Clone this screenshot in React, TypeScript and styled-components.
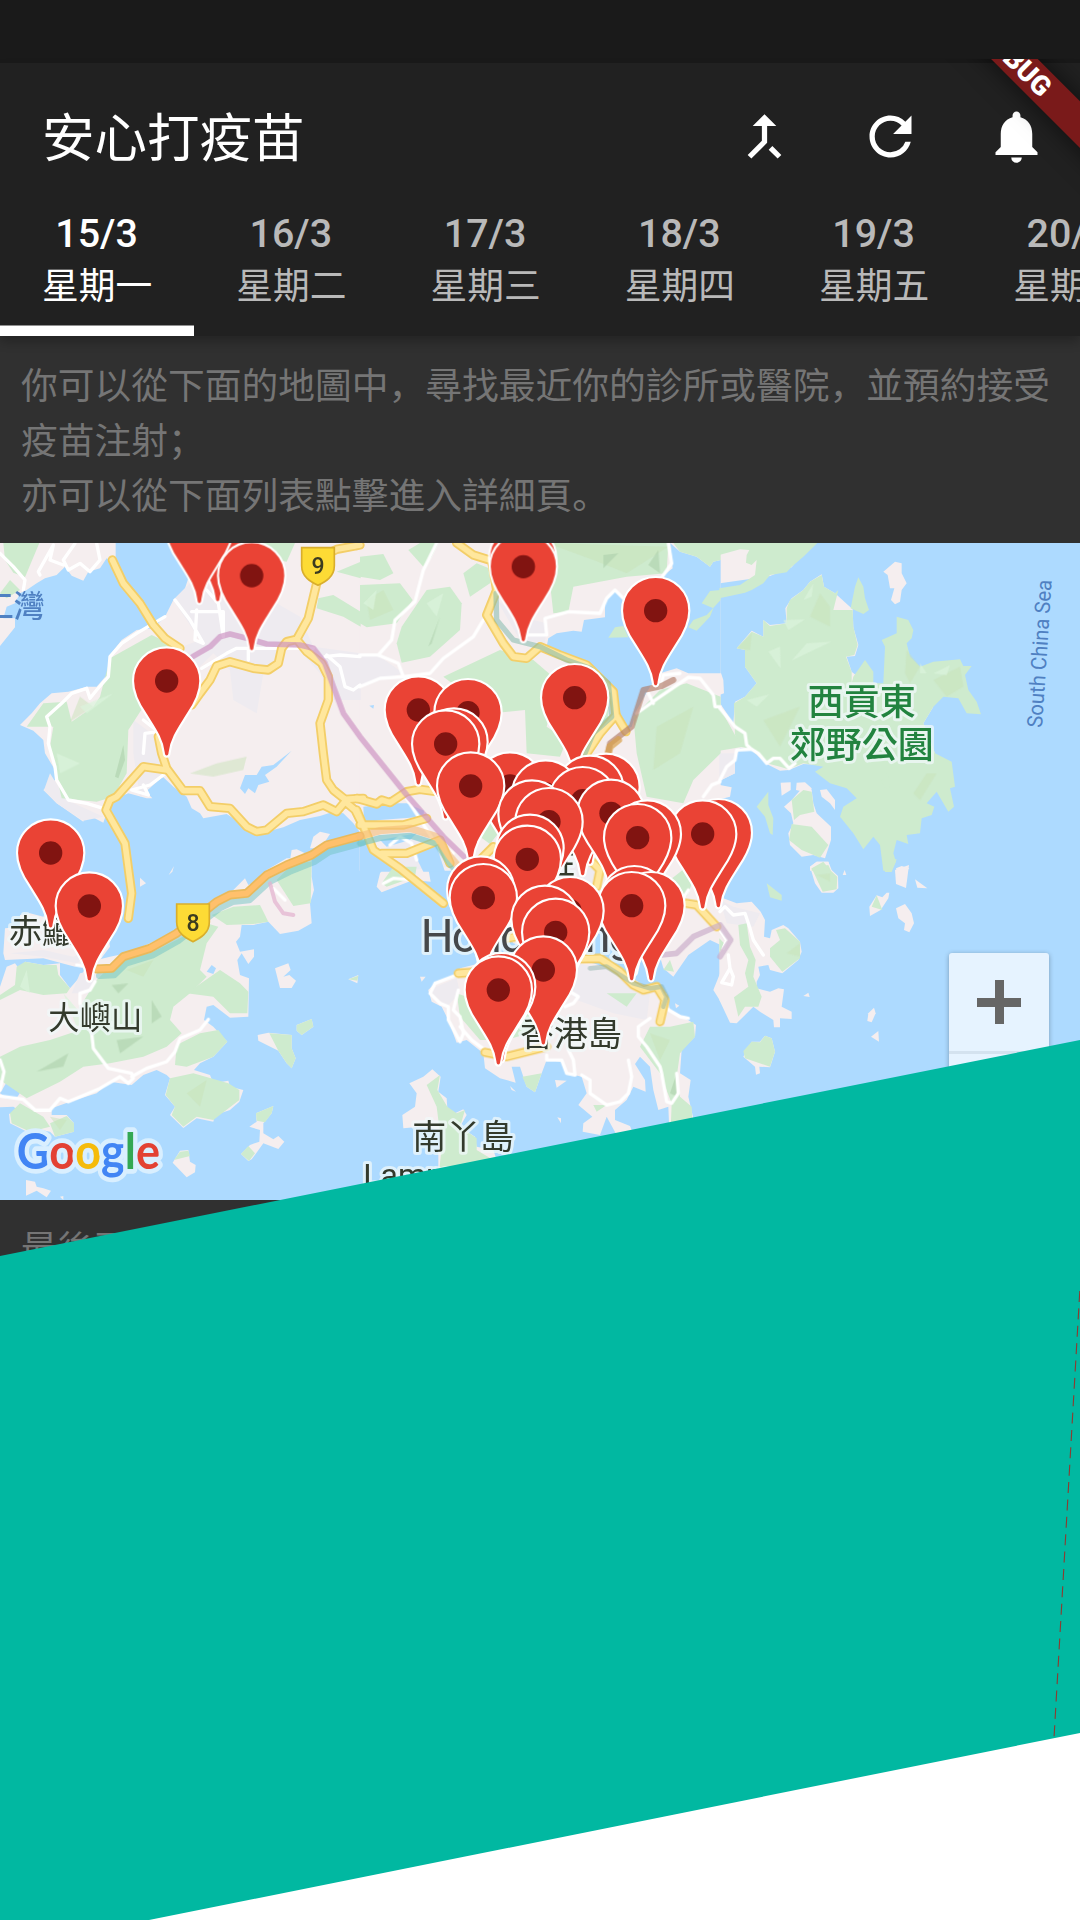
import React from "react";
import styled, { createGlobalStyle, css } from "styled-components";
import { MdCallMerge, MdRefresh, MdNotifications } from "react-icons/md";

const FONT = `Roboto, "Noto Sans CJK SC", sans-serif`;

const Global = createGlobalStyle`
  * { box-sizing: border-box; }
  body { margin: 0; background: #fff; font-family: ${FONT}; }
`;

const Screen = styled.main`
  position: relative;
  width: 1080px;
  height: 1920px;
  overflow: hidden;
  display: flex;
  flex-direction: column;
  background: #303030;
`;

const StatusBar = styled.div`
  height: 63px;
  flex: none;
  background: #1a1a1a;
`;

const AppBar = styled.header`
  position: relative;
  flex: none;
  height: 273px;
  background: #212121;
  box-shadow: 0 6px 10px rgba(0, 0, 0, 0.24);
`;

const Toolbar = styled.div`
  height: 147px;
  padding-left: 42px;
  display: flex;
  align-items: center;
  justify-content: space-between;
`;

const Title = styled.h1`
  margin: 0;
  padding-top: 5px;
  color: #fff;
  font-size: 52.5px;
  font-weight: 400;
  line-height: 76px;
`;

const Actions = styled.div`
  display: flex;
`;

const IconButton = styled.button`
  width: 126px;
  height: 126px;
  padding: 0 1px 0 0;
  border: 0;
  background: none;
  color: #fff;
  font-size: 63px;
  display: flex;
  align-items: center;
  justify-content: center;
`;

const Tabs = styled.nav`
  height: 126px;
  display: flex;
  overflow: hidden;
`;

const Tab = styled.div<{ $active?: boolean }>`
  flex: none;
  width: 194.25px;
  height: 126px;
  padding-top: 3px;
  display: flex;
  flex-direction: column;
  align-items: center;
  white-space: nowrap;
  color: ${(p) => (p.$active ? "#fff" : "#b9b9b9")};
  ${(p) =>
    p.$active &&
    css`
      box-shadow: inset 0 -10.5px 0 #fff;
    `}
`;

const TabDate = styled.span`
  padding-right: 1px;
  font-size: 39.4px;
  font-weight: 500;
  line-height: 42px;
`;

const TabDay = styled.span`
  font-size: 36.75px;
  line-height: 64px;
`;

const Content = styled.section`
  flex: none;
  display: flex;
  flex-direction: column;
`;

const Notice = styled.p`
  margin: 0;
  height: 207px;
  padding: 23px 21px 0;
  color: #757575;
  font-size: 36.75px;
  line-height: 55px;
`;

const Updated = styled.p`
  margin: 0;
  padding: 22px 21px;
  color: #757575;
  font-size: 36.75px;
  line-height: 55px;
`;

const MapFrame = styled.div`
  position: relative;
  height: 657px;
  background: #addaff;
`;

const MapCanvas = styled.svg`
  display: block;
  width: 1080px;
  height: 657px;
`;

const ZoomControl = styled.div`
  position: absolute;
  left: 949px;
  top: 410px;
  width: 100px;
  height: 200px;
  border-radius: 3px;
  background: #e6f3ff;
  box-shadow: 0 1px 5px rgba(0, 0, 0, 0.3);
`;

const ZoomButton = styled.div`
  height: 101px;
  display: flex;
  align-items: center;
  justify-content: center;
  border-bottom: 3px solid #d4e2ef;
`;

const PlusMark = styled.span`
  width: 44px;
  height: 44px;
  background: linear-gradient(#666, #666) center / 44px 9px no-repeat,
    linear-gradient(#666, #666) center / 9px 44px no-repeat;
`;

const BannerClip = styled.div`
  position: absolute;
  top: 59px;
  right: 0;
  width: 320px;
  height: 200px;
  overflow: hidden;
`;

const DebugBanner = styled.div`
  position: absolute;
  left: 55.5px;
  top: -15.5px;
  width: 400px;
  height: 32.5px;
  transform: rotate(45deg);
  background: #7a1a1a;
  box-shadow: 0 0 26px rgba(0, 0, 0, 0.6);
  color: #fff;
  font-size: 27.5px;
  font-weight: 900;
  line-height: 33px;
  text-align: center;
`;

const Sweep = styled.div`
  position: absolute;
  left: 0;
  top: 0;
  width: 1080px;
  height: 1920px;
  background: #01b8a1;
  clip-path: polygon(0 1256px, 1080px 1040px, 1080px 1920px, 0 1920px);
`;

const Blank = styled.div`
  position: absolute;
  left: 0;
  top: 0;
  width: 1080px;
  height: 1920px;
  background: #fff;
  clip-path: polygon(149px 1920px, 1080px 1733px, 1080px 1920px);
`;

const DashedTrace = styled.svg`
  position: absolute;
  left: 0;
  top: 0;
  width: 1080px;
  height: 1920px;
`;

/* Map geometry: the map is split into six sheets, three across and two down. */
const SHEETS = [
  [0, 0],
  [1080, 0],
  [2160, 0],
  [0, 960],
  [1080, 960],
  [2160, 960],
];

const LAND: string[][] = [
  [
    "0,0 347,0 347,70 320,55 300,85 265,95 250,122 215,107 195,80 170,105 135,115 110,130 80,150 60,160 45,190 20,200 10,235 45,235 45,262 0,318",
    "610,0 570,100 555,145 520,180 495,230 460,265 410,270 365,300 330,345 325,400 290,440 260,440 205,455 155,460 120,490 95,520 60,555 100,572 130,600 135,640 165,690 165,720 130,750 170,790 250,845 255,820 310,848 330,790 350,775 385,760 440,775 457,775 425,740 445,725 490,712 520,740 560,770 575,805 600,820 610,835 680,822 700,835 730,840 760,870 800,875 850,862 900,840 960,828 1000,815 1030,820 1060,850 1082,880 1082,0",
    "940,890 960,875 990,882 962,925 930,925",
    "875,930 890,928 915,940 900,960 870,960",
  ],
  [
    "-2,0 1082,0 1082,992 -2,992",
  ],
  [
    "0,390 10,420 12,460 -2,465",
    "0,490 40,550 45,485 75,470 110,430 75,380 75,330 50,325 95,272 130,290 130,240 150,255 200,250 196,205 215,175 250,150 270,125 305,103 312,140 345,160 398,208 400,262 415,315 405,348 380,350 395,395 500,480 640,500 610,550 645,640 560,700 385,680 250,672 207,690 180,692 140,672 95,630 60,625 45,650 45,700 0,722",
    "0,735 35,742 30,770 0,778",
    "490,95 525,65 545,70 545,100 560,130 545,150 540,185 525,193 513,180 523,145 510,145 503,105",
    "215,780 250,740 275,750 280,790 290,820 333,860 333,900 315,955 280,945 245,950 210,915 205,880 220,850 213,820 192,800",
    "300,750 320,748 345,780 345,810 330,790 305,770",
    "182,728 212,727 212,750 185,767",
    "230,728 255,727 275,745 272,760 228,750",
    "270,980 290,965 325,965 333,992 270,992",
    "528,985 545,978 568,985 560,992 530,992",
    "0,9 120,20 245,45 215,82 150,108 0,130",
  ],
  [
    "15,205 60,200 60,165 90,160 130,170 220,180 325,225 330,260 300,300 225,320 130,295 15,300 10,280",
    "0,380 20,320 45,310 60,330 75,305 130,315 180,310 180,345 210,385 240,350 260,320 290,300 330,290 380,280 450,250 530,210 600,180 640,150 700,90 735,55 745,75 765,65 800,30 860,-5 935,-5 935,50 942,90 930,130 935,190 895,212 840,222 805,185 760,195 725,195 720,230 708,245 720,275 762,268 762,290 745,312 725,280 712,300 720,345 747,355 745,470 690,473 640,435 620,440 612,480 640,500 682,545 640,590 600,610 582,630 630,645 640,670 685,662 690,680 730,690 718,725 690,750 645,765 640,785 590,775 550,804 510,765 525,740 495,705 510,655 500,645 470,630 430,645 395,675 330,665 290,700 210,725 155,745 155,765 200,765 222,790 222,815 165,830 150,815 125,810 90,820 30,790 27,762 55,750 40,740 0,742",
    "825,325 865,310 872,330 850,350 868,345 888,362 875,384 840,384",
    "890,495 935,477 940,500 905,525 890,512",
    "773,525 805,518 875,525 875,565 887,595 875,625 860,610 835,572 775,542",
    "768,760 820,738 815,760 790,790 790,820 820,838 835,828 853,845 835,867 790,850 755,898 745,903 723,882 750,855 778,845 780,810 748,800 770,785",
    "518,908 540,872 565,870 570,905 587,915 585,937 560,952",
    "78,960 105,965 110,980 130,985 153,992 140,1012 110,992 78,1007",
    "1045,358 1075,345 1072,370",
    "506,45 522,18 517,35",
    "420,53 438,70 420,80",
    "180,1010 190,1008 190,1020",
  ],
  [
    "60,40 90,-2 200,-2 212,65 160,60 65,97 50,80",
    "390,-2 1082,-2 1082,255 1050,240 985,285 940,350 910,325 880,220 850,170 790,150 740,190 700,210 640,250 540,270 460,250 430,200 400,100",
    "1082,335 1060,390 1082,425",
    "205,390 225,370 290,350 300,325 360,310 480,300 640,300 700,310 760,330 800,345 860,380 920,400 930,450 960,465 1008,495 1005,530 965,570 960,640 992,660 985,710 1000,775 1000,860 930,860 925,740 895,750 880,690 870,620 840,590 825,612 855,660 857,695 820,680 800,720 765,750 765,780 810,798 817,815 770,825 740,770 720,825 668,815 670,790 697,770 655,735 680,700 665,650 620,640 605,605 560,600 545,640 525,697 500,680 480,620 455,620 467,668 420,655 375,625 370,580 320,540 290,548 265,480 245,440 215,425",
    "148,670 190,650 217,628 242,650 235,695 260,715 262,745 285,760 310,748 320,765 300,800 345,830 350,860 400,870 420,930 235,960 235,880 245,810 180,800 130,805 127,765 165,740 170,700",
    "180,350 197,350 185,365",
    "585,660 620,662 590,683",
    "450,678 468,695 455,690",
    "592,772 603,775 603,790",
    "945,430 958,437 948,445",
  ],
  [
    "-2,110 50,130 95,125 122,155 135,180 132,230 150,235 155,210 190,195 205,205 240,245 245,275 235,300 187,340 150,330 145,315 115,320 120,345 110,365 110,385 150,395 175,385 192,388 185,440 215,455 215,477 180,475 180,502 162,502 160,480 120,455 100,440 70,470 50,490 30,488 -2,420",
    "270,20 290,5 325,5 335,30 354,48 355,85 340,98 305,98 285,70",
    "525,30 567,15 558,84 528,72",
    "585,58 622,85 592,83",
    "448,140 470,106 487,112 500,98 508,98 505,115 482,150 450,168",
    "528,145 555,132 575,160 582,190 568,217 552,210 555,190 535,175",
    "445,460 462,443 467,460 455,487 442,483",
    "453,530 475,513 477,545",
    "70,590 95,545 120,545 135,527 155,535 165,575 150,622 118,620 120,640 108,644 105,620",
    "250,408 265,398 269,411",
    "368,45 374,30 379,45",
  ],
];

const URBAN: string[][] = [
  [
    "520,180 600,100 680,190 760,230 830,190 900,230 940,320 1082,340 1082,480 1000,480 960,400 880,310 840,350 790,400 770,520 700,480 690,390 640,340 590,390 520,330 600,300",
    "400,540 480,600 500,700 420,770 400,640",
    "150,700 200,780 310,830 250,842 170,790 132,750",
  ],
  ["0,340 60,350 130,400 60,420 0,440", "410,180 480,230 560,250 555,310 480,300", "30,980 120,880 220,880 270,980 150,990"],
  ["-2,640 45,640 45,700 -2,722"],
  ["30,280 130,270 220,290 300,260 230,310 130,290", "240,340 290,330 270,400 215,400"],
  ["205,390 290,355 300,400 260,440", "640,310 780,330 870,400 860,480 760,460 650,420 620,380", "400,0 700,0 740,160 640,240 480,250 410,120"],
  ["0,120 40,140 120,160 100,200 20,190"],
];

const WATER: string[][] = [
  ["720,745 735,705 770,705 785,680 820,675 875,632 830,680 795,705 808,725 775,735 765,760 745,745 735,762"],
  [
    "930,9 960,35 1010,50 1050,80 1060,65 1082,60 1082,400 985,400 950,385 900,400 870,440 830,510 815,560 795,570 775,520 770,470 740,430 700,385 660,360 600,345 560,320 565,295 590,280 640,272 665,275 672,240 735,232 735,185 765,150 795,175 900,115 938,85",
    "10,800 100,790 140,790 192,812 190,830 60,840 12,850",
    "-2,905 30,900 60,960 135,995 -2,995",
    "165,945 225,905 255,995 190,995",
    "60,900 170,880 150,900 80,920",
    "28,497 42,495 40,506",
  ],
  [],
  ["0,700 30,650 50,645 65,690 50,715 20,715", "620,335 635,315 648,325 640,342"],
  [],
  [],
];

const GREEN: string[][] = [
  [
    "10,9 118,9 75,112 40,98 15,60",
    "455,285 530,320 545,400 430,500 385,570 380,700 340,770 290,785 185,775 150,620 160,560 80,560 130,490 200,485 215,545 280,500 300,470 330,355",
    "780,9 885,9 860,65 800,55",
    "955,175 1000,165 1082,215 1082,260 1030,230 950,205",
    "1010,95 1082,65 1082,115",
    "0,160 30,120 60,150 20,175",
  ],
  [
    "0,50 70,42 100,100 60,120 0,110",
    "0,135 120,130 158,180 110,250 20,262 0,250",
    "125,260 200,150 270,140 305,190 300,270 210,350 125,368 110,310",
    "145,30 180,9 235,9 215,50 190,80",
    "310,100 350,70 400,90 390,130 330,170",
    "560,9 925,9 920,100 800,110 640,140 625,215 580,220 570,130",
    "250,410 420,330 520,360 590,420 560,560 620,600 600,650 500,640 495,510 400,520 330,470",
    "820,530 900,450 980,430 1082,470 1082,640 1000,720 970,790 860,770 830,640",
    "940,9 1082,9 1082,60 1060,65 1050,80 1010,50 960,35",
    "1082,150 1050,153 1025,190 1060,205 1050,230 1010,272 985,262 1000,240 1040,225 1082,180",
    "745,293 765,262 790,258 805,292",
    "560,430 680,400 740,440 745,540 680,600 600,560",
    "360,890 385,840 415,880 390,912",
  ],
  [
    "-2,9 292,9 250,50 215,80 200,97 150,105 130,130 95,150 75,158 -2,175 -2,145 60,135 105,105 110,60 95,75 78,68 80,45 88,30 60,28 -2,45",
    "305,105 312,140 345,160 355,150 340,210 398,210 400,260 413,315 403,345 378,350 395,395 395,430 400,410 435,360 460,395 460,430 490,430 495,320 485,300 530,280 530,230 565,240 580,270 575,295 560,310 570,350 600,380 640,365 720,358 730,378 755,378 735,405 745,450 770,485 783,523 740,520 715,475 670,470 640,500 610,550 645,640 695,665 705,740 690,745 702,800 685,815 650,755 620,790 643,800 635,825 605,835 600,880 560,885 565,912 530,900 520,940 528,965 515,992 490,992 480,915 460,890 430,928 400,880 360,830 370,800 410,775 380,745 330,730 285,695 310,680 250,670 205,688 180,680 140,670 105,630 60,620 45,585 42,490 75,470 110,430 75,380 75,330 50,325 95,275 130,290 130,240 150,258 200,250 200,205 210,180 250,150 270,125",
    "-2,500 45,585 70,620 -2,632",
    "415,112 430,140 435,175 447,210 430,222 392,205 405,140",
    "110,800 145,755 145,795 160,835 158,885 150,880 135,830",
    "215,780 250,750 275,755 283,815 240,825 222,840",
    "215,852 275,860 325,915 300,953 245,930 207,900",
    "275,985 325,975 333,992 275,992",
    "485,720 505,692 508,748 492,742",
  ],
  [
    "0,405 45,375 50,320 75,305 130,315 170,315 175,345 210,385 200,400 130,405 60,390 0,420",
    "290,360 350,300 450,280 540,235 620,190 655,200 620,250 600,330 620,350 570,400 520,440 510,480 545,520 500,560 430,590 330,610 250,620 180,665 80,715 0,660 0,590 60,560 150,540 240,510 240,440",
    "635,165 700,140 780,135 805,185 760,192 680,195",
    "830,60 880,10 935,5 932,130 880,138",
    "560,400 660,330 720,370 745,395 742,460 690,460 640,410",
    "530,555 600,520 655,510 682,545 640,590 560,620 525,615",
    "510,655 580,640 685,670 718,690 718,720 640,780 590,770 550,800 515,765 525,740 497,705",
    "30,760 60,730 130,770 150,800 90,815 35,790",
    "150,790 200,768 222,790 222,815 165,830",
    "890,495 935,477 940,500 905,525 890,512",
    "808,520 875,525 875,565 887,595 875,625 860,610 835,572",
    "768,760 820,738 815,760 795,787 770,782",
    "723,882 745,858 765,880 747,903",
    "522,900 540,875 565,872 570,888",
    "1045,358 1075,347 1072,362",
  ],
  [
    "290,400 320,410 390,500 400,540 360,540 300,470",
    "840,560 870,500 930,500 1000,485 1005,530 960,580 950,650 960,710 995,740 1000,860 930,860 935,730 900,640 870,600",
    "487,650 545,640 525,697 500,680",
    "200,675 240,645 232,690 262,740 290,760 315,750 300,800 350,835 350,870 400,900 235,960 245,860 230,740",
    "740,400 830,400 800,440",
    "65,70 100,20 170,20 165,50 80,80",
    "930,60 980,20 1000,60 980,110",
    "910,330 930,300 942,335",
    "430,450 510,440 540,510 440,540",
    "700,735 740,735 710,755",
  ],
  [
    "55,195 80,190 90,260 107,300 100,350 125,410 115,440 75,440 55,470 42,412 85,380 75,340 85,300 60,255",
    "150,265 180,240 168,210 195,205 240,245 240,295 187,335 150,290",
    "275,25 310,5 330,30 352,50 350,88 308,95",
    "490,-2 530,-2 515,36 495,36",
    "140,70 185,105 185,122 150,112",
    "455,140 470,106 487,150",
    "70,573 95,545 120,547 135,527 155,535 165,575 150,620 75,595",
    "-2,235 12,250 -2,280",
  ],
];

const SHADE: string[][] = [
  ["345,710 370,615 375,660 355,715"],
  ["730,45 775,40 730,85", "865,75 895,30 900,100", "205,320 240,230 215,310"],
  [],
  ["335,375 385,370 355,400", "110,635 205,580 190,620", "350,540 430,530 360,580", "455,420 485,470 455,490"],
  ["930,700 950,640 950,710"],
  [],
];

const SOFT_SHADE: string[][] = [
  ["570,700 650,670 740,650 730,690 640,710", "210,545 240,470 280,500"],
  ["560,9 925,20 800,100 700,60", "890,560 1000,500 960,640 880,690", "20,180 70,150 100,210 30,240"],
  ["560,330 600,380 570,430 555,400", "50,325 95,280 90,330", "640,420 720,380 730,440 680,470", "130,540 240,500 180,620", "580,760 620,700 650,700 600,780", "300,160 330,200 330,260 270,230"],
  ["150,770 200,780 180,810", "380,330 460,300 430,350", "560,700 620,660 600,740"],
  ["870,520 930,540 900,600"],
  ["200,280 240,250 240,290", "290,45 330,40 330,65"],
];

const LIGHT: string[][] = [
  ["240,500 340,460 260,520", "170,640 240,670 180,700"],
  ["10,190 50,150 40,210", "200,190 250,160 230,230"],
  ["145,335 180,320 182,385", "215,362 260,310 335,305 280,330", "250,180 280,130 275,170", "190,240 255,238 205,270", "600,370 620,400 600,400", "640,400 690,375 680,405", "80,480 148,463 110,500"],
  ["80,330 90,400 60,380", "190,400 260,480 230,500"],
  [],
  [],
];

const STREETS: string[][] = [
  [
    "0,40 40,80 75,120 70,150",
    "225,10 190,60 205,90 240,70 270,95 300,60 290,10",
    "120,105 115,95 160,15 150,60 190,75",
    "495,230 410,280 365,310 330,350 325,410 290,450 270,475 260,445 215,460 185,490 140,530 150,560 145,610 165,680 170,720 205,780 260,790 310,805",
    "525,180 570,240 610,310 585,300 590,210",
    "575,215 670,215 670,290 655,190 620,150",
    "430,540 475,575 435,580 430,640",
    "605,385 680,340 710,325 940,325",
    "745,325 745,360",
    "975,350 1020,345 1080,350",
    "980,345 1020,380 1035,440 1060,450 1080,435",
    "490,705 450,735 395,750 445,765 430,735",
  ],
  [
    "230,9 190,90 165,185 105,240 95,300 55,345 0,345",
    "55,345 115,370 130,410 210,400 250,355 340,290 370,240",
    "130,410 60,415 0,440",
    "925,9 935,70 900,120",
    "500,285 560,285 555,235 625,215 720,220 740,175 765,150 800,185",
    "830,520 900,470 985,412 1020,415 1060,465 1065,500 1080,500",
    "880,490 865,460",
    "900,445 910,405 960,400",
    "1030,770 1055,735 1080,725",
    "130,760 220,900 280,940",
    "90,915 120,890 155,910 170,960",
  ],
  ["0,505 45,560 75,580 80,615 95,628 115,640 140,670 160,655 180,655 207,685 225,670", "95,628 50,630 45,660 20,680 0,720"],
  [
    "285,365 270,390 240,400 240,430 275,520 280,565 325,625 395,640 400,655 385,670 360,650 300,685 205,725 180,715 150,750 105,750 70,718 0,708",
    "395,650 440,625 500,605 525,575 540,535 600,510 625,478",
    "0,600 12,635 0,690",
    "230,315 260,320 300,290",
    "820,85 855,120",
  ],
  [
    "290,345 225,370 210,400 240,430 265,440 265,480 300,545 310,520 300,470 280,450 295,390",
    "300,500 335,540 375,570",
    "560,585 560,600 605,600 620,640 645,645 640,600 625,570",
    "665,645 690,660 690,700 740,735 780,725 805,700 815,650 805,600",
    "870,475 835,500 835,530 860,560 900,620 905,640 920,725 935,730 955,700 950,640",
    "630,395 655,410 640,430 615,440",
    "910,440 960,470 985,475",
    "70,70 100,55 165,60",
    "985,90 940,160 910,200 860,260",
  ],
  [
    "0,155 15,140 40,165 75,160 90,205 100,240 130,285",
    "0,210 20,240 10,265",
    "25,285 30,325 40,350 35,375 5,368 30,325",
  ],
];

const TRUNKS: string[][] = [
  [
    "337,60 370,130 420,190 460,255 495,295 540,325",
    "1080,15 1010,28 975,45 950,130 925,235 890,298 860,305 845,325 835,370 805,390 760,385 690,365 650,378 630,420 600,460 575,495",
    "890,298 920,335 965,370 985,410 985,480 960,550 970,640 980,720 1000,750 1035,778 1090,775",
    "475,590 485,640 500,685 550,752 600,752 630,800 690,805 740,860 770,875 800,870 860,820 910,815 970,795 1010,815 1035,785 1065,810 1085,850",
    "500,690 430,680 350,770 330,780 318,810 375,910 395,1060 385,1135",
  ],
  [
    "-10,775 50,792 65,780 90,788 140,755 180,748 230,755",
    "-10,810 40,930 120,985 250,1090",
    "0,855 130,855 200,835",
    "65,940 140,940 240,900 270,970",
    "290,9 340,45 395,62 410,150 380,225 430,310 460,350 500,355 540,320 600,345 680,375 760,455 768,525 720,580 680,640",
    "768,525 798,575",
    "360,960 400,920",
  ],
  [],
  [],
  [
    "295,340 360,335",
    "650,297 720,295 780,335 820,375 850,390 890,380 915,420 900,485",
    "375,577 440,590 500,575 560,560",
    "980,130 1010,135 1070,200",
    "690,0 720,30 710,80",
    "440,235 470,230",
  ],
  [],
];

const DOTS: [number, number][] = [
  [653, -40], [598, -35], [1568, 55], [1570, 80], [755, 107], [1967, 212], [500, 423],
  [1724, 473], [1255, 510], [1404, 518], [1362, 606], [1337, 612], [1530, 738], [1818, 742],
  [1770, 748], [1637, 762], [1748, 782], [1412, 738], [1833, 820], [1596, 822], [1647, 845],
  [2155, 878], [2108, 882], [1942, 882], [1913, 893], [1590, 925], [1582, 958], [152, 939],
  [1442, 1050], [1450, 1073], [1903, 1079], [1953, 1097], [1895, 1097], [268, 1098],
  [1710, 1112], [1635, 1138], [1667, 1177], [1630, 1290], [1505, 1340], [1495, 1350],
];

const PIN =
  "M0,-101C56,-101 101,-56 101,0C101,38 82,72 62,101C38,140 14,172 9,214Q8,227 0,227Q-8,227 -9,214C-14,172 -38,140 -62,101C-82,72 -101,38 -101,0C-101,-56 -56,-101 0,-101Z";

const Areas = ({ sheets, fill, opacity = 1 }: { sheets: string[][]; fill: string; opacity?: number }) => (
  <g fill={fill} opacity={opacity}>
    {sheets.map((shapes, i) => (
      <g key={i} transform={`translate(${SHEETS[i][0]} ${SHEETS[i][1]})`}>
        {shapes.map((pts) => (
          <polygon key={pts} points={pts} />
        ))}
      </g>
    ))}
  </g>
);

const Lines = ({ sheets, stroke, width }: { sheets: string[][]; stroke: string; width: number }) => (
  <g fill="none" stroke={stroke} strokeWidth={width} strokeLinecap="round" strokeLinejoin="round">
    {sheets.map((lines, i) => (
      <g key={i} transform={`translate(${SHEETS[i][0]} ${SHEETS[i][1]})`}>
        {lines.map((pts) => (
          <polyline key={pts} points={pts} />
        ))}
      </g>
    ))}
  </g>
);

const HIGHWAY = "290,1287 335,1285 370,1250 450,1225 530,1180 650,1085 690,1065 740,1060 800,1005 860,975 935,945 980,915 1080,888";
const HIGHWAY_EAST = "1080,888 1140,872 1230,865 1310,890 1350,950 1380,985";
const RAIL = "578,350 630,320 660,290 690,282 740,295 800,312 900,315 940,325 975,370 1000,440 1030,520 1080,590 1220,765 1330,890 1392,950";

const Shield = ({ x, y, n }: { x: number; y: number; n: string }) => (
  <g transform={`translate(${x} ${y})`}>
    <path d="M-49,-56H49V-2C49,32 22,46 0,57C-22,46 -49,32 -49,-2Z" fill="#fddb35" stroke="#d9ae2c" strokeWidth="5" />
    <text y="24" textAnchor="middle" fontSize="69" fontWeight="500" fill="#3b3b20">{n}</text>
  </g>
);

const Label = styled.text<{ $tone?: string }>`
  font-family: Roboto, "Noto Sans CJK TC", sans-serif;
  fill: ${(p) => p.$tone || "#333a2c"};
  stroke: rgba(240, 248, 250, 0.75);
  stroke-width: 18px;
  stroke-linejoin: round;
  paint-order: stroke;
`;

const SeaLabel = styled.text`
  font-family: Roboto, "Noto Sans CJK TC", sans-serif;
  fill: #4f80c2;
`;

const Logo = styled.text`
  font-family: Lato, sans-serif;
  font-size: 147px;
  font-weight: 700;
  stroke: #d9efff;
  stroke-width: 28px;
  stroke-linejoin: round;
  paint-order: stroke;
`;

const LogoLetters: [string, string][] = [
  ["G", "#4285f4"], ["o", "#e34133"], ["o", "#f5bb0b"], ["g", "#4285f4"], ["l", "#34a853"], ["e", "#e34133"],
];

const HongKongMap = () => (
  <MapCanvas viewBox="0 9 3240 1971">
    <Areas sheets={LAND} fill="#f5eeef" />
    <Areas sheets={URBAN} fill="#eeebf0" />
    <Areas sheets={WATER} fill="#addaff" />
    <Areas sheets={GREEN} fill="#ceebce" />
    <Areas sheets={SOFT_SHADE} fill="#c9e2b9" opacity={0.5} />
    <Areas sheets={SHADE} fill="#aed0ac" opacity={0.6} />
    <Areas sheets={LIGHT} fill="#dcf4dd" opacity={0.7} />
    <Lines sheets={STREETS} stroke="#ffffff" width={10} />
    <Lines sheets={TRUNKS} stroke="#f3ce68" width={28} />
    <Lines sheets={TRUNKS} stroke="#ffe79d" width={17} />
    <g fill="none" strokeLinecap="round" strokeLinejoin="round">
      <polyline points={HIGHWAY} stroke="#72c4c4" strokeWidth="20" opacity="0.5" transform="translate(8 20)" />
      <polyline points={HIGHWAY} stroke="#e9b95c" strokeWidth="27" />
      <polyline points={HIGHWAY} stroke="#ffc06c" strokeWidth="17" />
      <g opacity="0.6">
        <polyline points={HIGHWAY_EAST} stroke="#72c4c4" strokeWidth="18" transform="translate(0 22)" />
        <polyline points={HIGHWAY_EAST} stroke="#f6bd77" strokeWidth="22" />
      </g>
      <polyline points={RAIL} stroke="#cb8fc0" strokeWidth="17" opacity="0.65" />
      <polyline points="2020,420 1985,438 1930,450 1895,560 1830,610 1825,635" stroke="#b07b65" strokeWidth="18" opacity="0.65" />
      <polyline points="1855,600 1830,620 1822,650" stroke="#d9a048" strokeWidth="22" opacity="0.7" />
      <polyline points="1488,160 1490,240 1540,300 1620,320 1700,360 1770,385 1825,430 1835,530 1780,580 1755,640" stroke="#83b9ac" strokeWidth="16" opacity="0.55" />
      <polyline points="1985,1245 2030,1240 2080,1190 2160,1155 2192,1200 2160,1250" stroke="#c8aac8" strokeWidth="17" opacity="0.65" />
      <polyline points="1770,1285 1820,1280 1900,1330 1950,1345 1985,1340 2000,1370 1990,1400" stroke="#78a49c" strokeWidth="14" opacity="0.4" />
      <polyline points="810,1030 825,1085 850,1120 880,1125" stroke="#e2b0ce" strokeWidth="12" opacity="0.7" />
    </g>
    <Shield x={954} y={79} n="9" />
    <Shield x={579} y={1148} n="8" />

    <SeaLabel x="134" y="230" textAnchor="end" fontSize="93" fontWeight="500">工灣</SeaLabel>
    <SeaLabel transform="translate(3126 564) rotate(-86.2)" fontSize="64" textLength="444" lengthAdjust="spacingAndGlyphs">South China Sea</SeaLabel>
    <Label x="2585" y="525" textAnchor="middle" fontSize="108" fontWeight="500" $tone="#22833f">西貢東</Label>
    <Label x="2585" y="654" textAnchor="middle" fontSize="108" fontWeight="500" $tone="#22833f">郊野公園</Label>
    <Label x="26" y="1208" fontSize="100">赤鱲角</Label>
    <Label x="145" y="1468" fontSize="94">大嶼山</Label>
    <Label x="1262" y="1235" fontSize="138" textLength="642" $tone="#46484a">Hong Kong</Label>
    <Label x="1644" y="1002" fontSize="80" fontWeight="500">旺</Label>
    <Label x="1560" y="1517" fontSize="102">香港島</Label>
    <Label x="1237" y="1828" fontSize="102">南丫島</Label>
    <Label x="1090" y="1938" fontSize="96">Lamma Island</Label>
    <Logo x="50" y="1886" textLength="430" lengthAdjust="spacingAndGlyphs">
      {LogoLetters.map(([ch, color], i) => (
        <tspan key={i} fill={color}>{ch}</tspan>
      ))}
    </Logo>

    {DOTS.map(([x, y], i) => (
      <g key={i} transform={`translate(${x} ${y})`}>
        <path d={PIN} fill="#ea4335" stroke="#fff" strokeWidth="6.5" />
        <circle r="35" fill="#811411" />
      </g>
    ))}
  </MapCanvas>
);

const DAYS = [
  ["15/3", "星期一"],
  ["16/3", "星期二"],
  ["17/3", "星期三"],
  ["18/3", "星期四"],
  ["19/3", "星期五"],
  ["20/3", "星期六"],
];

export default function App() {
  return (
    <Screen>
      <Global />
      <StatusBar />
      <AppBar>
        <Toolbar>
          <Title>安心打疫苗</Title>
          <Actions>
            <IconButton><MdCallMerge /></IconButton>
            <IconButton><MdRefresh /></IconButton>
            <IconButton><MdNotifications /></IconButton>
          </Actions>
        </Toolbar>
        <Tabs>
          {DAYS.map(([date, day], i) => (
            <Tab key={date} $active={i === 0}>
              <TabDate>{date}</TabDate>
              <TabDay>{day}</TabDay>
            </Tab>
          ))}
        </Tabs>
      </AppBar>
      <Content>
        <Notice>
          你可以從下面的地圖中，尋找最近你的診所或醫院，並預約接受疫苗注射；
          <br />
          亦可以從下面列表點擊進入詳細頁。
        </Notice>
        <MapFrame>
          <HongKongMap />
          <ZoomControl>
            <ZoomButton><PlusMark /></ZoomButton>
          </ZoomControl>
        </MapFrame>
        <Updated>最後更新</Updated>
      </Content>
      <BannerClip>
        <DebugBanner>DEBUG</DebugBanner>
      </BannerClip>
      <Sweep />
      <Blank />
      <DashedTrace viewBox="0 0 1080 1920">
        <line x1="1079.8" y1="1291" x2="1054" y2="1738" stroke="#8f3a30" strokeWidth="1.1" strokeDasharray="11 6.4" />
      </DashedTrace>
    </Screen>
  );
}
